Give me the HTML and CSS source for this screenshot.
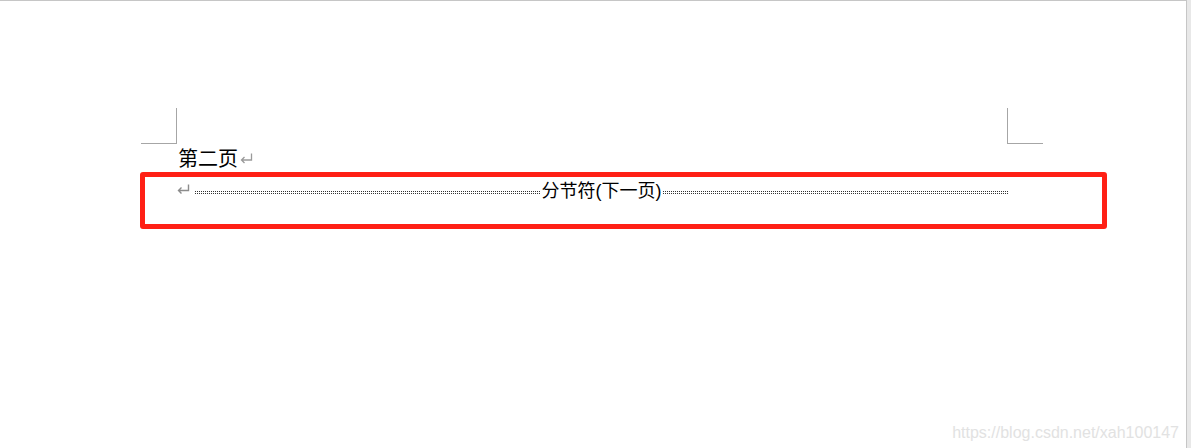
FILE: index.html
```html
<!DOCTYPE html>
<html lang="zh">
<head>
<meta charset="utf-8">
<title>分节符</title>
<link rel="stylesheet" href="styles.css">
</head>
<body>
<div class="page">
  <div class="marks">
    <div class="mark mark-left"></div>
    <div class="mark mark-right"></div>
  </div>
  <div class="body">
    <div class="line line1"><span>第二页</span><svg class="ret" width="13" height="11" viewBox="0 0 13 11"><path d="M11.5 0.5 V7 H1.5 M4.5 4 L1.5 7 L4.5 10" fill="none" stroke="#9a9a9a" stroke-width="1.3"/></svg></div>
    <div class="line line2">
      <svg class="ret ret2" width="13" height="10" viewBox="0 0 13 10"><path d="M11.5 0.5 V6.5 H1.5 M4.5 3.5 L1.5 6.5 L4.5 9.5" fill="none" stroke="#8c8c8c" stroke-width="1.4"/></svg>
      <span class="dots"></span>
      <span class="brk">分节符(下一页)</span>
      <span class="dots"></span>
    </div>
  </div>
  <div class="highlight"></div>
  <div class="watermark">https://blog.csdn.net/xah100147</div>
</div>
</body>
</html>
```
FILE: styles.css
```css
html, body {
  margin: 0;
  padding: 0;
}
body {
  background: #e8e8e8;
  width: 1191px;
  height: 448px;
  overflow: hidden;
  font-family: "Noto Sans CJK SC", "Liberation Sans", sans-serif;
}
.page {
  position: relative;
  width: 1186px;
  height: 447px;
  background: #fff;
  border-top: 1px solid #c6c6c6;
  border-right: 1px solid #c6c6c6;
}
.marks {
  display: flex;
  justify-content: space-between;
  margin-left: 141px;
  width: 902px;
  padding-top: 107px;
}
.mark {
  width: 35px;
  height: 35px;
  border-bottom: 1px solid #a6a6a6;
}
.mark-left {
  border-right: 1px solid #a6a6a6;
}
.mark-right {
  border-left: 1px solid #a6a6a6;
}
.body {
  margin-left: 177px;
  width: 831px;
}
.line {
  display: flex;
  align-items: center;
  color: #000;
}
.line1 {
  font-size: 20px;
  height: 26px;
  padding-left: 1px;
}
.line1 .ret {
  margin-left: 2px;
  margin-top: 2px;
}
.line2 {
  font-size: 18px;
  height: 26px;
  margin-top: 6px;
}
.ret2 {
  flex: none;
  margin-right: 5px;
  margin-top: -1px;
}
.dots {
  flex: 1;
  height: 3px;
  margin-top: 6px;
  background-image:
    linear-gradient(to right, #333 1px, transparent 1px),
    linear-gradient(to right, #333 1px, transparent 1px);
  background-size: 2px 1px, 2px 1px;
  background-position: 0 0, 0 2px;
  background-repeat: repeat-x, repeat-x;
}
.brk {
  flex: none;
  font-family: "Liberation Sans", "Noto Sans CJK SC", sans-serif;
  padding: 0 1px;
}
.highlight {
  position: absolute;
  left: 140px;
  top: 171px;
  width: 957px;
  height: 47px;
  border: 5px solid #ff2015;
  border-radius: 3px;
}
.watermark {
  position: absolute;
  right: 7px;
  bottom: 6px;
  font-family: "Liberation Sans", Arial, sans-serif;
  font-size: 16px;
  color: #e2e2e2;
}
```
